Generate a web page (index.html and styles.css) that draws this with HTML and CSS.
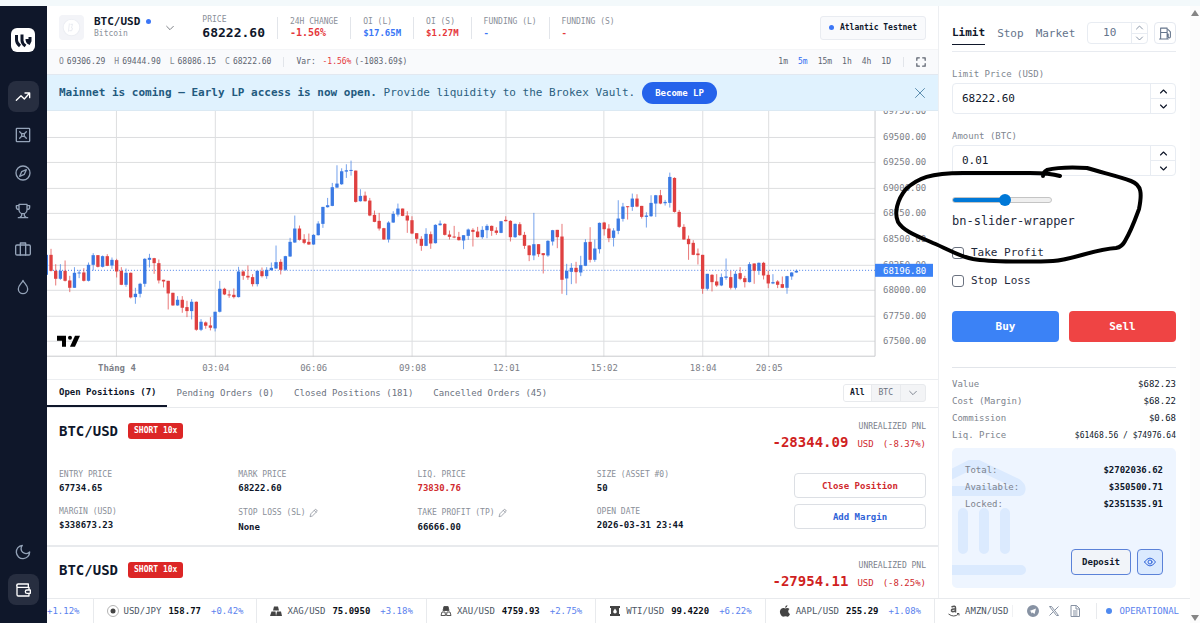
FILE: index.html
```html
<!DOCTYPE html>
<html lang="en">
<head>
<meta charset="utf-8">
<title>Brokex – BTC/USD</title>
<link rel="stylesheet" href="styles.css">
</head>
<body>
<svg class="defs" aria-hidden="true">
  <symbol id="chev-down" viewBox="0 0 24 24"><path d="M4 8l8 8 8-8"/></symbol>
  <symbol id="chev-up" viewBox="0 0 24 24"><path d="M4 16l8-8 8 8"/></symbol>
  <symbol id="pencil" viewBox="0 0 24 24"><path d="M3 21l2-7L17 2q3 0 5 5L10 19zM14 5l5 5"/></symbol>
</svg>
<div class="app">
  <nav class="sidebar" aria-label="Main">
    <a class="logo" href="#" aria-label="Brokex"><svg viewBox="0 0 24 24"><path d="M5.500 7v5q0 3 3.500 6M11 6.500v6q0 3 3.500 5.500M16 11q0 3 2 4l1-2V9"/></svg></a>
    <div class="side-links">
      <a class="side-btn on" href="#" aria-label="Trade"><svg class="ico" viewBox="0 0 24 24"><path d="M2 17l7-7 5 5 8-9M15 6h7v7"/></svg></a>
      <a class="side-btn" href="#" aria-label="Grid"><svg class="ico" viewBox="0 0 24 24"><rect x="2" y="2" width="20" height="20" rx="1"/><path d="M7 7l3 3h4l3-3M7 17l3-3h4l3 3M10 10v4M14 10v4"/></svg></a>
      <a class="side-btn" href="#" aria-label="Explore"><svg class="ico" viewBox="0 0 24 24"><circle cx="12" cy="12" r="10.500"/><path d="M17 7l-3 7-7 3 3-7z"/></svg></a>
      <a class="side-btn" href="#" aria-label="Leaderboard"><svg class="ico" viewBox="0 0 24 24"><path d="M6 2h12v8a6 6 0 0 1-12 0zM6 4H2v2a4 4 0 0 0 4 4M18 4h4v2a4 4 0 0 1-4 4M10 16v3l-3 3M14 16v3l3 3M5 22h14"/></svg></a>
      <a class="side-btn" href="#" aria-label="Portfolio"><svg class="ico" viewBox="0 0 24 24"><rect x="1" y="6" width="22" height="15" rx="2"/><path d="M8 21V3h8v18"/></svg></a>
      <a class="side-btn" href="#" aria-label="Faucet"><svg class="ico" viewBox="0 0 24 24"><path d="M12 2c1 4 7 7 7 13a7 7 0 0 1-14 0c0-6 6-9 7-13z"/></svg></a>
    </div>
    <div class="side-links side-end">
      <button class="side-btn" aria-label="Dark mode"><svg class="ico" viewBox="0 0 24 24"><path d="M11 2a7 7 0 0 0 11 10A10 10 0 1 1 11 2z"/></svg></button>
      <button class="side-btn on" aria-label="Wallet"><svg class="ico" viewBox="0 0 24 24"><path d="M20 7V3H5a2.500 2.500 0 0 0 0 5h16v4M3 5v14a2 2 0 0 0 2 2h16v-4M23 12h-5a2 2 0 0 0 0 5h5z"/></svg></button>
    </div>
  </nav>

  <main class="main">
    <header class="market">
      <div class="coin"><svg viewBox="0 0 24 24"><circle cx="12" cy="12" r="8"/><path d="M10 8l-1 8M11 9h2l-1 3 1 1-1 2h-2"/></svg></div>
      <div class="pair"><h1>BTC/USD <i class="dot"></i></h1><p>Bitcoin</p></div>
      <button class="pick" aria-label="Choose market"><svg class="ico"><use href="#chev-down"/></svg></button>
      <dl class="stats">
        <div class="price"><dt>PRICE</dt><dd>68222.60</dd></div>
        <div class="change"><dt>24H CHANGE</dt><dd class="neg">-1.56%</dd></div>
        <div><dt>OI (L)</dt><dd class="pos">$17.65M</dd></div>
        <div><dt>OI (S)</dt><dd class="neg">$1.27M</dd></div>
        <div><dt>FUNDING (L)</dt><dd class="pos">-</dd></div>
        <div><dt>FUNDING (S)</dt><dd class="neg">-</dd></div>
      </dl>
      <div class="network"><i class="dot"></i>Atlantic Testnet</div>
    </header>

    <div class="ohlc">
      <span class="bar"><em>O</em>69306.29</span><span class="bar"><em>H</em>69444.90</span><span class="bar"><em>L</em>68086.15</span><span class="bar"><em>C</em>68222.60</span>
      <i class="rule"></i>
      <span class="var">Var: <b>-1.56%</b>(-1083.69$)</span>
      <div class="frames">
        <button>1m</button><button class="on">5m</button><button>15m</button><button>1h</button><button>4h</button><button>1D</button>
        <i class="rule"></i>
        <button aria-label="Fullscreen"><svg class="ico" viewBox="0 0 24 24"><path d="M2 8V2h6M16 2h6v6M22 16v6h-6M8 22H2v-6"/></svg></button>
      </div>
    </div>

    <div class="banner">
      <p><strong>Mainnet is coming — Early LP access is now open.</strong> Provide liquidity to the Brokex Vault.</p>
      <button class="lp">Become LP</button>
      <button class="close" aria-label="Dismiss"><svg class="ico" viewBox="0 0 24 24"><path d="M3 3l18 18M21 3L3 21"/></svg></button>
    </div>

    <svg class="chart" id="chart" viewBox="0 0 892 268" role="img" aria-label="BTC/USD 5 minute candles"></svg>

    <div class="tabs">
      <button class="on">Open Positions (7)</button><button>Pending Orders (0)</button><button>Closed Positions (181)</button><button>Cancelled Orders (45)</button>
      <div class="filter"><button class="on">All</button><button>BTC</button><button aria-label="More"><svg class="ico"><use href="#chev-down"/></svg></button></div>
    </div>

    <div class="positions">
      <article class="position">
        <div class="pos-head"><h2>BTC/USD</h2><span class="badge">SHORT 10x</span>
          <div class="pnl"><p>UNREALIZED PNL</p><p class="amount"><b>-28344.09</b><span>USD</span><span>(-8.37%)</span></p></div></div>
        <div class="pos-body">
          <dl>
            <div><dt>ENTRY PRICE</dt><dd>67734.65</dd></div>
            <div><dt>MARK PRICE</dt><dd>68222.60</dd></div>
            <div><dt>LIQ. PRICE</dt><dd class="liq">73830.76</dd></div>
            <div><dt>SIZE (ASSET #0)</dt><dd>50</dd></div>
            <div><dt>MARGIN (USD)</dt><dd>$338673.23</dd></div>
            <div><dt>STOP LOSS (SL) <button aria-label="Edit stop loss"><svg class="ico"><use href="#pencil"/></svg></button></dt><dd>None</dd></div>
            <div><dt>TAKE PROFIT (TP) <button aria-label="Edit take profit"><svg class="ico"><use href="#pencil"/></svg></button></dt><dd>66666.00</dd></div>
            <div><dt>OPEN DATE</dt><dd>2026-03-31 23:44</dd></div>
          </dl>
          <div class="actions"><button class="danger">Close Position</button><button class="add">Add Margin</button></div>
        </div>
      </article>
      <article class="position">
        <div class="pos-head"><h2>BTC/USD</h2><span class="badge">SHORT 10x</span>
          <div class="pnl"><p>UNREALIZED PNL</p><p class="amount"><b>-27954.11</b><span>USD</span><span>(-8.25%)</span></p></div></div>
      </article>
    </div>
  </main>

  <aside class="order">
    <div class="order-tabs">
      <button class="on">Limit</button><button>Stop</button><button>Market</button>
      <div class="field lev"><input type="text" value="10" aria-label="Leverage"><div class="step"><button aria-label="Increase leverage"><svg class="ico"><use href="#chev-up"/></svg></button><button aria-label="Decrease leverage"><svg class="ico"><use href="#chev-down"/></svg></button></div></div>
      <button class="fuel" aria-label="Gas"><svg class="ico" viewBox="0 0 24 24"><path d="M3 22V2h12v20zM3 10h12M15 13h2v5q0 2 2 2t2-2V9l-4-4M1 22h16"/></svg></button>
    </div>
    <label for="price">Limit Price (USD)</label>
    <div class="field"><input id="price" type="text" value="68222.60"><div class="step"><button aria-label="Increase price"><svg class="ico"><use href="#chev-up"/></svg></button><button aria-label="Decrease price"><svg class="ico"><use href="#chev-down"/></svg></button></div></div>
    <label for="amount">Amount (BTC)</label>
    <div class="field"><input id="amount" type="text" value="0.01"><div class="step"><button aria-label="Increase amount"><svg class="ico"><use href="#chev-up"/></svg></button><button aria-label="Decrease amount"><svg class="ico"><use href="#chev-down"/></svg></button></div></div>
    <input class="slider" id="size" type="range" min="0" max="100" value="53">
    <label class="slider-name" for="size">bn-slider-wrapper</label>
    <label class="check"><input type="checkbox">Take Profit</label>
    <label class="check"><input type="checkbox">Stop Loss</label>
    <div class="sides"><button class="buy">Buy</button><button class="sell">Sell</button></div>
    <dl class="summary">
      <div><dt>Value</dt><dd>$682.23</dd></div>
      <div><dt>Cost (Margin)</dt><dd>$68.22</dd></div>
      <div><dt>Commission</dt><dd>$0.68</dd></div>
      <div><dt>Liq. Price</dt><dd class="small">$61468.56 / $74976.64</dd></div>
    </dl>
    <section class="vault">
      <svg class="bank" viewBox="0 0 74 116"><path d="M-30 29L18 5q4-2 8 0l38 18q6 4 4 8H-30zM11 53v36M32 53v36M53 53v36M-30 110h99"/></svg>
      <dl>
        <div><dt>Total:</dt><dd>$2702036.62</dd></div>
        <div><dt>Available:</dt><dd>$350500.71</dd></div>
        <div><dt>Locked:</dt><dd>$2351535.91</dd></div>
      </dl>
      <div class="vault-actions"><button class="deposit">Deposit</button><button class="eye" aria-label="Hide balances"><svg class="ico" viewBox="0 0 24 24"><path d="M1 12q11-16 22 0-11 16-22 0z"/><circle cx="12" cy="12" r="4"/></svg></button></div>
    </section>
  </aside>

  <footer class="ticker">
    <ul>
      <li><span class="up">+1.12%</span></li>
      <li><svg viewBox="0 0 24 24"><circle cx="12" cy="12" r="11" fill="none" stroke="#999" stroke-width="1.500"/><circle cx="12" cy="12" r="5"/></svg>USD/JPY <b>158.77</b><span class="up">+0.42%</span></li>
      <li><svg viewBox="0 0 24 24"><path d="M8 3h8l2 8H6zM3 13h8l1 9H0zM14 13h8l2 9H12z"/></svg>XAG/USD <b>75.0950</b><span class="up">+3.18%</span></li>
      <li><svg viewBox="0 0 24 24"><path d="M8 2h8l2 8H6z"/><path class="line" d="M4 14h6l1 7H2zM14 14h6l2 7h-9zM8 3h8l2 8H6z"/></svg>XAU/USD <b>4759.93</b><span class="up">+2.75%</span></li>
      <li><svg viewBox="0 0 24 24"><path fill-rule="evenodd" d="M2 2h20v4h-2v12h2v4H2v-4h2V6H2zM12 7q-7 9 0 10 7-1 0-10z"/></svg>WTI/USD <b>99.4220</b><span class="up">+6.22%</span></li>
      <li><svg viewBox="0 0 24 24"><path d="M12 7c4-2 7-1 9 1-4 3-3 8 1 10-2 5-4 6-6 5q-3-1-6 0C6 25 1 17 2 12s6-7 10-5zM12 6q0-5 5-6 0 5-5 6z"/></svg>AAPL/USD <b>255.29</b><span class="up">+1.08%</span></li>
      <li><svg viewBox="0 0 24 24"><path class="line heavy" d="M7 4q8-4 8 2v9M15 8q-9-1-8 4 3 3 8-1"/><path class="line" d="M1 18q11 8 20 0M18 17h4v4"/></svg>AMZN/USD</li>
    </ul>
    <div class="links">
      <a href="#" aria-label="Telegram"><svg viewBox="0 0 24 24"><path fill="#8792a3" fill-rule="evenodd" d="M12 0a12 12 0 1 0 0 24 12 12 0 0 0 0-24zM5 12l13-5-3 11-4-3-2 2-1-4z"/></svg></a>
      <a href="#" aria-label="X"><svg viewBox="0 0 24 24"><path class="line" d="M3 3h4l14 18h-4zM21 3l-8 8M10 14l-7 7"/></svg></a>
      <a href="#" aria-label="Docs"><svg viewBox="0 0 24 24"><path class="line" d="M4 1h11l6 6v16H4zM14 1v7h7M8 12h9M8 16h9M8 20h9"/></svg></a>
    </div>
    <div class="status"><i class="dot"></i>OPERATIONAL</div>
  </footer>

  <div class="scroll" aria-hidden="true"><i class="arrow-up"></i><i class="arrow-down"></i></div>
  <svg class="ink" viewBox="0 0 250 100" aria-hidden="true"><path d="M170 11C160 8 150 8 140 8C110 8 90 8 73 8C40 8 28 13 16 24C7 35 4 48 8 57C14 67 30 72 43 78C60 85 68 91 83 94C100 97 145 97 163 96C182 95 205 84 226 83Q232 82 235 76C242 64 246 52 249 44C252 29 252 20 241 16C228 11 213 8 197 3C180 2 165 3 157 5Q153 7 153 11"/></svg>
</div>
<script src="chart.js"></script>
</body>
</html>
```

FILE: styles.css
```css
* { box-sizing: border-box; margin: 0; padding: 0; }
body { font: 9px/16px "DejaVu Sans Mono", "Liberation Mono", monospace; color: #0f172a; background: #f3f9fb; }
button, input { font: inherit; color: inherit; background: none; border: 0; }
button { cursor: pointer; white-space: nowrap; }
a { color: inherit; text-decoration: none; }
ul { list-style: none; }
svg { display: block; flex: none; }
.defs { position: absolute; width: 0; height: 0; }
.ico { width: 16px; height: 16px; fill: none; stroke: currentColor; stroke-width: 2; stroke-linecap: round; stroke-linejoin: round; }
.dot { display: inline-block; width: 5px; height: 5px; border-radius: 50%; background: #3b76f6; }
.rule { width: 1px; height: 10px; background: #e2e5ea; }
.pos { color: #3b76f6; }
.neg { color: #e5383b; }

.app { position: relative; display: grid; grid-template: 1fr 25px / 47px minmax(0, 1fr) 251px 10px; height: 100vh; padding-top: 6px; overflow: hidden; }

.sidebar { grid-row: 1 / 3; display: flex; flex-direction: column; align-items: center; padding: 22px 1px 18px 0; background: #0f172a; color: #94a3b8; }
.logo { width: 24px; height: 24px; border-radius: 6px; background: #fff; margin-bottom: 29px; }
.logo svg { fill: none; stroke: #0f172a; stroke-width: 3; }
.side-links { display: flex; flex-direction: column; gap: 7px; }
.side-end { margin-top: auto; }
.side-btn { display: grid; place-items: center; width: 31px; height: 31px; border-radius: 8px; }
.side-btn.on { background: #272e40; color: #fff; }

.main { background: #fff; border-right: 1px solid #edeff2; min-width: 0; min-height: 0; overflow: hidden; display: flex; flex-direction: column; }
.main > * { flex: none; }
.market { display: flex; align-items: center; height: 44px; padding: 0 12px; border-bottom: 1px solid #f4f5f7; }
.coin { width: 25px; height: 25px; border-radius: 4px; background: #f3f4f8; }
.coin svg { fill: #fff; stroke: #eceef3; }
.pair { margin-left: 10px; }
.pair h1 { display: flex; align-items: center; gap: 6px; font-size: 11px; line-height: 13px; }
.pair p { font-size: 8px; line-height: 12px; color: #8a8f99; }
.pick { margin: 0 27px 0 14px; color: #64686f; }
.pick .ico { width: 10px; height: 10px; }
.stats { display: flex; align-items: center; }
.stats > div { padding: 0 12px; }
.stats > div + div { border-left: 1px solid #e2e5ea; }
.stats > .price { padding-left: 0; }
.stats dt { font-size: 8px; line-height: 10px; color: #8a8f99; }
.stats dd { line-height: 12px; font-weight: 700; }
.stats .price dd { font-size: 13px; line-height: 16px; }
.stats .change dd { font-size: 10px; }
.network { display: flex; align-items: center; gap: 6px; margin-left: auto; padding: 3px 8px; border: 1px solid #e9ecf1; border-radius: 3px; background: #f9fafc; font-size: 8px; font-weight: 700; }

.ohlc { display: flex; align-items: center; height: 25px; padding: 0 12px; background: #f9fafc; border-bottom: 1px solid #e2e8f0; font-size: 8px; color: #5d6470; }
.bar { display: flex; gap: 3px; margin-right: 9px; }
.bar em { font-style: normal; color: #80868f; }
.ohlc > .rule { margin-left: 3px; }
.var { margin-left: 12px; }
.var b { margin: 0 3px 0 2px; color: #e5383b; font-weight: 400; }
.frames { display: flex; align-items: center; gap: 10px; margin-left: auto; }
.frames .on { color: #2f6df2; }
.frames .rule { margin: 0 2px; }
.frames .ico { width: 10px; height: 10px; stroke-width: 3; }

.banner { display: flex; align-items: center; height: 36px; padding: 0 12px; background: #e0f2fe; color: #2b5f80; font-size: 11px; border-bottom: 1px solid #dbe9f3; }
.banner strong { color: #235a7e; }
.lp { margin-left: 7px; height: 22px; padding: 0 13px; border-radius: 11px; background: #2563eb; color: #fff; font-size: 9px; font-weight: 700; }
.close { margin-left: auto; color: #5d8fb0; }
.close .ico { width: 12px; height: 12px; }

.chart { width: 100%; height: auto; border-bottom: 1px solid #eceef1; }
.chart text { font-size: 9px; fill: #7d8087; }
.chart .time { text-anchor: middle; }
.chart .day { font-weight: 700; }
.chart .grid { stroke: #dddee0; fill: none; }
.chart .axis { stroke: #c9cacd; fill: none; }
.chart .last { stroke: #4a80e8; stroke-dasharray: 1 2; }
.chart .tag { fill: #3b82f6; }
.chart .tag-text { fill: #fff; }
.chart .bull { fill: #3b7ae4; }
.chart .bear { fill: #df4040; }
.chart .wick { opacity: .7; }

.tabs { display: flex; height: 28px; padding-right: 12px; border-bottom: 1px solid #e8eaed; color: #6b7280; }
.tabs > button { padding: 0 10px; }
.tabs > button.on { padding-left: 12px; color: #0f172a; font-weight: 700; border-bottom: 2px solid #0f172a; }
.filter { display: flex; align-self: center; margin-left: auto; height: 18px; border: 1px solid #e8eaed; border-radius: 3px; overflow: hidden; background: #f3f4f6; font-size: 8px; }
.filter button { padding: 0 6px; }
.filter button + button { border-left: 1px solid #e8eaed; padding: 0 7px; }
.filter .on { background: #fff; color: #0f172a; font-weight: 700; }
.filter .ico { width: 10px; height: 10px; }

.position { padding: 12px 12px 11px; border-bottom: 2px solid #e8eaed; }
.pos-head { display: flex; align-items: flex-start; }
.pos-head h2 { font-size: 14px; line-height: 22px; }
.badge { margin: 3px 0 0 10px; padding: 0 6px; border-radius: 3px; background: #dc2626; color: #fff; font-size: 8px; font-weight: 700; }
.pnl { margin-left: auto; text-align: right; color: #d02a2e; line-height: 18px; }
.pnl p:first-child { font-size: 8px; line-height: 13px; color: #7d838d; }
.amount { display: flex; align-items: baseline; justify-content: flex-end; gap: 9px; }
.amount b { font-size: 14px; color: #d01f22; }
.pos-body { display: flex; align-items: center; margin-top: 16px; }
.pos-body dl { flex: 1; display: grid; grid-template-columns: repeat(4, 1fr); row-gap: 11px; margin-right: 18px; }
.pos-body dt { display: flex; align-items: center; gap: 3px; font-size: 8px; line-height: 12px; color: #8a8f99; }
.pos-body dt .ico { width: 9px; height: 14px; }
.pos-body dd { font-weight: 700; line-height: 14px; }
.pos-body .liq { color: #d02a2e; }
.actions { display: grid; gap: 6px; width: 132px; }
.actions button { height: 25px; border: 1px solid #dcdfe4; border-radius: 4px; font-weight: 700; }
.actions .danger { color: #d02a2e; }
.actions .add { color: #2f63d8; }

.order { background: #fff; min-height: 0; padding: 16px 14px 0 13px; display: flex; flex-direction: column; }
.order > * { flex: none; }
.order-tabs { display: flex; align-items: flex-start; height: 30px; margin-bottom: 14px; border-bottom: 1px solid #e8ebf0; font-size: 11px; color: #64748b; }
.order-tabs > button { height: 23px; margin-right: 12px; }
.order-tabs > .on { color: #0f172a; font-weight: 700; border-bottom: 1px solid #0f172a; }
.order-tabs > .fuel { display: grid; place-items: center; flex: none; width: 22px; height: 22px; margin: 0 0 0 6px; border: 1px solid #e5e9f0; border-radius: 4px; }
.fuel .ico { width: 13px; height: 13px; }
.order > label { color: #80868f; }
.field { display: flex; height: 31px; margin: 1px 0 14px; border: 1px solid #e8ecf2; border-radius: 4px; font-size: 11px; }
.field input { flex: 1; min-width: 0; padding-left: 9px; outline: 0; }
.step { display: grid; width: 25px; border-left: 1px solid #e8ecf2; }
.step button { display: grid; place-items: center; min-height: 0; }
.step button + button { border-top: 1px solid #e8ecf2; }
.step .ico { width: 9px; height: 9px; stroke-width: 3; }
.lev { flex: 1; height: 22px; margin: 0; }
.lev input { padding: 0; text-align: center; width: 20px; }
.lev .step { width: 16px; }
.lev .ico { stroke-width: 2; }
.slider { appearance: none; width: 100px; height: 12px; margin: 4px 0 6px; }
.slider::-webkit-slider-runnable-track { height: 6px; border-radius: 3px; border: 1px solid #c4c4c4; background: linear-gradient(to right, #0078d7 52%, #efefef 52%) border-box; }
.slider::-webkit-slider-thumb { appearance: none; width: 12px; height: 12px; margin-top: -4px; border-radius: 50%; background: #0078d7; }
.order > .slider-name { font-size: 12px; line-height: 18px; color: #1e293b; margin-bottom: 15px; }
.order > .check { display: flex; align-items: center; gap: 7px; height: 16px; margin-bottom: 12px; font-size: 11px; color: #1e293b; }
.check input { appearance: none; width: 12px; height: 12px; border: 1px solid #6b7280; border-radius: 3px; }
.sides { display: grid; grid-template-columns: 1fr 1fr; gap: 10px; margin-top: 10px; }
.sides button { height: 31px; border-radius: 4px; color: #fff; font-size: 11px; font-weight: 700; }
.sides .buy { background: #3b82f6; }
.sides .sell { background: #ef4444; }
.summary { margin-top: 25px; padding-top: 8px; border-top: 1px solid #e2e5ea; }
.order dl > div { display: flex; justify-content: space-between; line-height: 17px; }
.order dt { color: #7d838d; }
.order .small { font-size: 8px; }
.vault { position: relative; margin-top: 4px; height: 140px; padding: 14px 13px 13px; border-radius: 5px; background: #eef5ff; display: flex; flex-direction: column; justify-content: space-between; overflow: hidden; }
.vault dd { font-weight: 700; }
.vault dl, .vault-actions { position: relative; }
.bank { position: absolute; left: 0; top: 12px; width: 74px; height: 116px; fill: none; stroke: #dbeafe; stroke-width: 10; stroke-linecap: round; stroke-linejoin: round; }
.vault-actions { display: flex; justify-content: flex-end; gap: 6px; }
.vault-actions button { display: grid; place-items: center; height: 26px; padding: 0 10px; border: 1px solid #5b82d8; border-radius: 4px; background: #f1f4f9; font-weight: 700; }
.vault-actions .eye { padding: 0 6px; background: #dbeafe; color: #2f63d8; }
.eye .ico { width: 12px; height: 12px; }

.ticker { grid-column: 2 / 4; display: flex; align-items: center; background: #fff; border-top: 1px solid #e8eaed; color: #4b5563; }
.ticker ul { flex: 1; display: flex; min-width: 0; overflow: hidden; }
.ticker li { display: flex; align-items: center; flex: none; height: 24px; padding: 0 13px; border-right: 1px solid #e8eaed; }
.ticker li:first-child { padding-left: 0; }
.ticker li:last-child { border: 0; padding-right: 0; }
.ticker li svg { width: 12px; height: 12px; margin-right: 5px; fill: #444; }
.ticker .line { fill: none; stroke: #555; stroke-width: 2; }
.ticker .heavy { stroke-width: 3; }
.ticker b { margin-left: 7px; color: #0b0f18; }
.up { color: #5b82ee; }
.ticker b + .up { margin-left: 10px; }
.links { display: flex; align-items: center; gap: 9px; padding: 0 15px 0 14px; border-left: 1px solid #f0f1f3; }
.links svg { width: 12px; height: 12px; }
.links .line { stroke: #8792a3; }
.status { display: flex; align-items: center; gap: 7px; padding: 0 11px 0 9px; border-left: 1px solid #e8eaed; color: #5b82ee; }
.status .dot { width: 6px; height: 6px; background: #4f8af0; }

.scroll { grid-area: 1 / 4 / 3 / 5; display: flex; flex-direction: column; align-items: center; justify-content: space-between; padding: 4px 0 2px; background: #fcfcfc; }
.arrow-up, .arrow-down { border: 4px solid transparent; }
.arrow-up { border-top: 0; border-bottom: 6px solid #858585; }
.arrow-down { border-bottom: 0; border-top: 6px solid #858585; }
.ink { position: absolute; right: 60px; top: 165px; width: 250px; height: 100px; overflow: visible; fill: none; stroke: #000; stroke-width: 4; stroke-linecap: round; pointer-events: none; }
```

FILE: chart.js
```js
// Each candle: direction, high, body top, body bottom, low (in thirds of a pixel).
const candles = `B450,450,510,510 R432,450,498,500 R478,498,522,542 B478,498,522,525 R467,498,528,530 R513,527,549,562 B487,504,549,549 B495,503,506,520 R490,503,528,530 B473,480,528,530 B445,451,480,497 R451,451,486,488 B452,454,486,488 R448,454,483,484 B458,465,482,492 R462,466,500,518 R487,498,540,541 B491,504,540,546 R503,504,578,581 B549,567,577,597 B534,537,567,578 B460,462,537,546 B447,459,465,488 R459,460,475,507 R464,475,527,536 R525,525,530,548 R528,528,566,614 R564,564,602,603 B574,585,602,603 R574,585,609,624 R588,607,619,637 B583,591,619,644 R590,591,675,678 B643,651,675,679 R650,653,663,672 R637,662,669,677 B621,621,671,680 B528,552,621,623 R549,552,569,571 R557,569,572,579 R551,570,577,581 B486,500,577,578 R497,500,513,525 R482,513,518,525 R508,517,538,545 B497,498,538,545 R488,499,514,518 B487,495,514,522 B473,489,496,498 B422,472,491,492 R463,471,495,509 B453,454,495,498 B399,411,455,456 B332,371,413,414 R362,371,405,407 R388,403,414,418 R386,411,419,420 B388,390,419,420 B349,356,391,392 B306,306,357,369 B279,301,307,308 B234,247,303,304 B181,236,248,249 B190,199,238,240 B178,196,200,219 B167,195,198,212 R197,197,291,293 B253,273,289,290 R260,272,289,290 R279,287,332,334 R317,330,351,352 R324,348,371,377 R369,370,404,405 B349,353,404,413 B319,327,353,354 B296,311,329,335 R311,311,333,334 R319,332,347,384 R334,346,386,388 R385,385,402,416 R394,402,423,438 B370,387,423,424 R380,388,416,432 B358,360,415,416 B347,356,361,362 R355,357,390,392 R377,389,396,404 R363,395,398,400 R381,396,406,407 B391,391,407,433 B371,374,393,405 R370,375,381,425 R366,380,397,398 B364,375,397,402 B358,363,376,400 R362,363,378,393 R367,377,384,390 B348,349,384,385 R334,345,349,350 R346,348,397,410 B356,357,397,399 R352,358,391,393 R381,390,423,432 R421,422,451,469 B324,418,452,466 R418,418,448,456 R445,445,451,506 B406,408,452,456 B375,376,410,422 R375,375,397,430 R357,395,525,567 B477,498,521,571 B475,489,501,538 R471,489,502,536 B453,481,503,514 B403,412,483,484 R367,411,465,473 B404,431,465,471 B353,354,433,446 R351,353,373,392 R358,371,400,412 B370,377,399,425 B286,341,378,388 B294,305,342,350 R304,304,307,344 B266,281,306,318 R268,281,305,307 R303,303,336,341 B322,332,336,368 B271,294,334,336 B270,271,296,336 R255,271,296,298 B285,291,295,302 B203,216,294,308 R217,219,321,323 R315,321,366,369 R358,366,404,405 R392,402,418,465 R406,414,450,451 R431,446,451,479 R450,450,552,567 B507,507,552,557 R508,510,532,560 R508,530,542,546 B506,517,542,544 B461,515,519,525 R498,517,549,554 B498,507,549,554 R487,505,522,526 R513,520,532,548 B472,478,532,533 R476,476,498,537 B473,474,498,510 R471,474,512,524 R498,510,536,550 B508,532,536,538 R526,530,540,550 R515,538,549,550 B513,514,549,567 B502,503,515,525 B494,498,503,504`;
const plotW = 829, plotH = 246;
const times = [[69, 'Tháng 4'], [168, '03:04'], [266, '06:06'], [365, '09:08'], [459, '12:01'], [557, '15:02'], [656, '18:04'], [722, '20:05']];
let out = '';
for (const [x, label] of times) {
  out += `<path class="grid" d="M${x + 0.5} 0V${plotH}"/>`;
  out += `<text class="time${label[0] === 'T' ? ' day' : ''}" x="${x + 1}" y="260">${label}</text>`;
}
for (let k = 0; k < 10; k++) {
  const y = Math.round(k * 25.6);
  if (k) out += `<path class="grid" d="M0 ${y + 0.5}H${plotW}"/>`;
  out += `<text x="837" y="${y + 3}">${69750 - k * 250}.00</text>`;
}
out += `<path class="axis" d="M0 ${plotH - 0.5}H${plotW}V0"/><path class="last" d="M0 159.5H${plotW}"/>`;
out += '<g transform="translate(0 -6) scale(.33333)">';
candles.split(' ').forEach((c, i) => {
  const [h, t, b, l] = c.slice(1).split(',').map(Number);
  const x = 12 + 14.08 * (i - 1);
  const cls = c[0] === 'B' ? 'bull' : 'bear';
  out += `<rect class="${cls} wick" x="${x - 1.5}" y="${h}" width="3" height="${l - h}"/><rect class="${cls}" x="${x - 5}" y="${t}" width="10" height="${b - t}"/>`;
});
out += '</g><rect class="tag" x="829" y="153" width="58" height="13"/><text class="tag-text" x="837" y="163">68196.80</text>';
// Logo of the chart vendor, bottom left of the plot.
out += '<g transform="translate(10 225)"><path d="M0 0h9v11H5V5H0z"/><circle cx="13" cy="2" r="2"/><path d="M18 0h5l-5 11h-5z"/></g>';
document.getElementById('chart').innerHTML = out;
```
